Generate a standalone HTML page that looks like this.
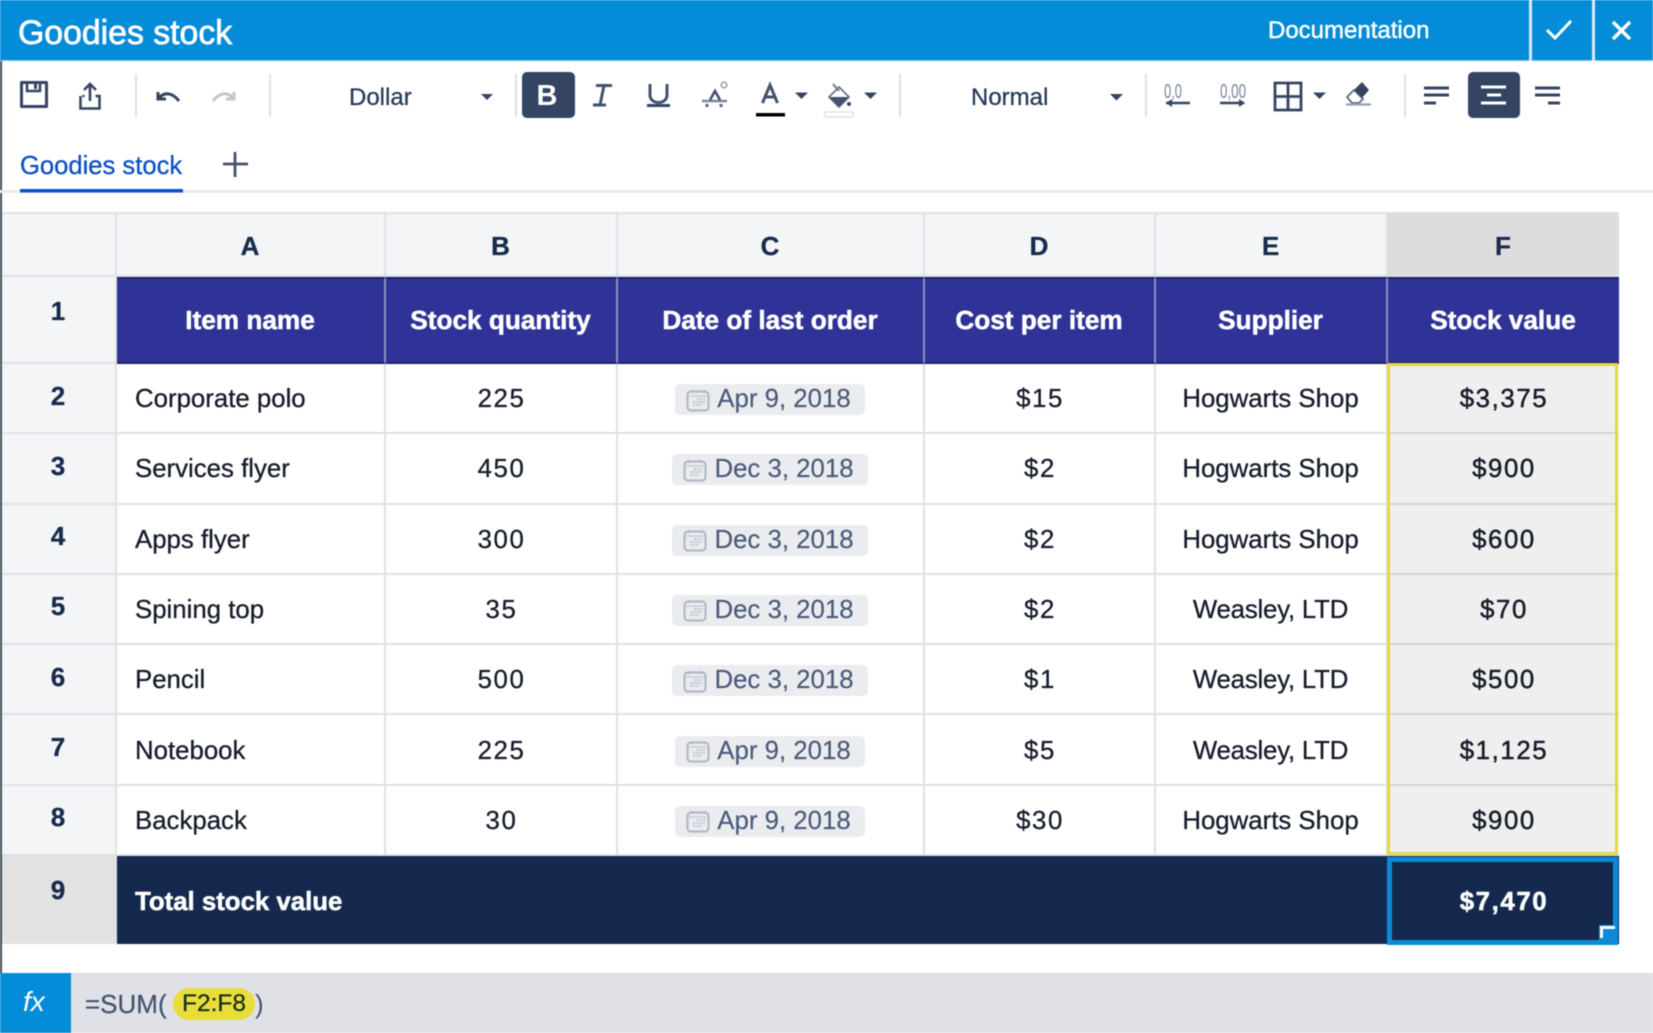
<!DOCTYPE html>
<html lang="en"><head><meta charset="utf-8"><title>Goodies stock</title>
<style>
*{box-sizing:border-box;margin:0;padding:0}
html,body{width:1653px;height:1033px;overflow:hidden;background:#fff}
body{font-family:"Liberation Sans",sans-serif;color:#172b4d;position:relative}
#root{position:absolute;left:0;top:0;width:1653px;height:1033px;filter:blur(.45px);background:#fff}
.a{position:absolute;white-space:nowrap}
.top{left:0;top:0;width:1653px;height:61px;background:#058cd8;border-bottom:1px solid #7cc3ee}
.grid{position:absolute;left:2px;top:212px;display:grid;grid-template-columns:115px 269px 232px 307px 231px 232px 231px;grid-template-rows:65px 87px repeat(7,70.286px) 88px;font-size:25.8px;color:#161c2b;-webkit-text-stroke:.3px #161c2b}
.grid>div{display:flex;align-items:center;justify-content:center;border-right:2px solid #dfe1e6;border-bottom:2px solid #dfe1e6;white-space:nowrap;background:#fff;padding-top:3px;padding-right:1px}
.n{letter-spacing:1.6px;padding-right:0!important;padding-left:1px}
.h{background:#f4f5f7!important;font-weight:700;font-size:26px;color:#172b4d;-webkit-text-stroke:.3px #172b4d}
.h.top1{border-top:2px solid #dfe1e6}
.h.sel{background:#dddddd!important;border-right:none!important}
.r{padding-top:0!important;padding-bottom:4px}
.r1{padding-bottom:16px}
.r9{background:#e2e2e2!important;padding-bottom:22px;border-bottom:none!important}
.p{background:#2f3296!important;color:#fff;font-weight:700;font-size:26.2px;padding-top:0!important;border-top:2px solid #1d2060;border-right:2px solid #8d8fc4!important;border-bottom:2px solid #20235f!important;-webkit-text-stroke:.5px #fff}
.l{justify-content:flex-start!important;padding-left:18px}
.f{background:#efefef!important;border-right:none!important;border-bottom:2px solid #d5d5d8!important;-webkit-text-stroke:.45px #111520}
.t{background:#15294f!important;color:#fff;font-weight:700;font-size:25.8px;border:none!important;padding-top:6px!important;-webkit-text-stroke:.5px #fff}
.pill{display:inline-flex;align-items:center;height:31px;background:#ebecf0;border-radius:5px;color:#4a5a78;padding:0 14px 0 11px;font-size:25.8px;gap:7px;-webkit-text-stroke:.15px #4a5a78}
.pill svg{flex:none}
</style></head><body><div id="root">
<svg width="0" height="0" style="position:absolute"><defs><symbol id="cal" viewBox="0 0 24 24" fill="none"><rect x="1.500" y="3.500" width="21" height="19" rx="3.500" stroke="#b3b9c4" stroke-width="2.200"/><path d="M6 2v3M18 2v3" stroke="#b3b9c4" stroke-width="2"/><path d="M3 8h18" stroke="#c8ccd4" stroke-width="1.500"/><path d="M11 11h8M7 14h12M7 17h9" stroke="#c1c7d0" stroke-width="2" stroke-dasharray="2.200 1"/></symbol></defs></svg>
<div class="a top"></div>
<div class="a" style="left:18px;top:12px;font-size:33.8px;line-height:42px;color:#fff;-webkit-text-stroke:.7px #fff">Goodies stock</div>
<div class="a" style="left:1268px;top:16px;font-size:24px;line-height:30px;color:#fff;-webkit-text-stroke:.45px #fff">Documentation</div>
<div class="a" style="left:1529px;top:0;width:3px;height:61px;background:#d6ecf9"></div>
<div class="a" style="left:1592px;top:0;width:3px;height:61px;background:#d6ecf9"></div>
<div class="a" style="left:0;top:61px;width:2px;height:912px;background:#3b4a55"></div>

<div class="a" style="left:349px;top:83px;font-size:24px;line-height:30px;color:#253858;-webkit-text-stroke:.25px #253858">Dollar</div>
<div class="a" style="left:971px;top:83px;font-size:24px;line-height:30px;color:#253858;-webkit-text-stroke:.25px #253858">Normal</div>
<div class="a" style="left:522px;top:72px;width:53px;height:46px;background:#344563;border-radius:5px"></div>
<div class="a" style="left:1468px;top:72px;width:52px;height:46px;background:#344563;border-radius:5px"></div>

<svg class="a" style="left:0;top:0" width="1653" height="200" viewBox="0 0 1653 200" fill="none">
<!-- check / close -->
<path d="M1547 30l8 8 16-17" stroke="#fff" stroke-width="3"/>
<path d="M1613 22l17 17M1630 22l-17 17" stroke="#fff" stroke-width="3.400"/>
<!-- separators -->
<g fill="#dfe1e6"><rect x="135" y="74" width="2" height="43"/><rect x="269" y="74" width="2" height="43"/><rect x="515" y="74" width="2" height="43"/><rect x="899" y="74" width="2" height="43"/><rect x="1145" y="74" width="2" height="43"/><rect x="1404" y="74" width="2" height="43"/></g>
<!-- save -->
<path d="M21.500 82.500h25v24h-25z" stroke="#344563" stroke-width="3" stroke-linejoin="round"/>
<path d="M27 83v8h13v-8" stroke="#344563" stroke-width="2.500"/><rect x="34" y="84" width="3" height="5" fill="#344563"/>
<!-- share -->
<path d="M80.500 96v12.500h19V96h-4M84.500 96h-2" stroke="#344563" stroke-width="2.600"/>
<path d="M90 101V84M84 90l6-6 6 6" stroke="#344563" stroke-width="2.600"/>
<!-- undo redo -->
<path d="M158 92v7h8M159 98c5-6 13-6 20 3" stroke="#344563" stroke-width="3"/>
<path d="M234 92v7h-8M233 98c-5-6-13-6-20 3" stroke="#c1c7d0" stroke-width="3"/>
<!-- carets -->
<g fill="#344563"><path d="M481 94h12l-6 6z"/><path d="M795 92.500h13l-6.500 6.500z"/><path d="M864 92.500h13l-6.500 6.500z"/><path d="M1110 94h13l-6.500 6.500z"/><path d="M1313 92.500h13l-6.500 6.500z"/></g>
<!-- B -->
<text x="547" y="105" text-anchor="middle" font-family="Liberation Sans" font-weight="700" font-size="29" fill="#fff">B</text>
<!-- I -->
<path d="M596 85.500h16M593 105h13M604 85.500l-4 19.500" stroke="#42526e" stroke-width="3"/>
<!-- U -->
<path d="M650 84v11c0 10 17 10 17 0V84" stroke="#42526e" stroke-width="3"/><rect x="647" y="104" width="23" height="3" fill="#344563"/>
<!-- strike A -->
<path d="M702 101h25" stroke="#7a869a" stroke-width="2.400"/><path d="M710 100l5-9 5 9" stroke="#42526e" stroke-width="2.600"/><circle cx="707" cy="105.500" r="1.700" fill="#5e6c84"/><circle cx="721" cy="105.500" r="1.700" fill="#5e6c84"/><circle cx="724" cy="85" r="2.800" stroke="#97a0af" stroke-width="1.600"/>
<!-- A colour -->
<path d="M762.500 103l7.500-18 7.500 18M765 97h10" stroke="#42526e" stroke-width="3"/>
<rect x="756" y="113" width="29" height="3.500" fill="#000"/>
<!-- paint -->
<path d="M829 97l10-10 10 10-10 10z" stroke="#6b778c" stroke-width="1.800"/><path d="M829 97h20l-10 10z" fill="#42526e"/><path d="M833 84l6 7" stroke="#6b778c" stroke-width="2"/><circle cx="849" cy="104" r="2" fill="#344563"/>
<rect x="824.500" y="112" width="29" height="5" rx="2" stroke="#dfe1e6" stroke-width="1.500"/>
<!-- decimals -->
<text x="1173" y="98" text-anchor="middle" font-family="Liberation Sans" font-size="20" fill="#7a869a" textLength="18" lengthAdjust="spacingAndGlyphs">0,0</text>
<path d="M1166 103h24" stroke="#344563" stroke-width="2.400"/><path d="M1172 99l-6 4 6 4" fill="#344563"/>
<text x="1233" y="98" text-anchor="middle" font-family="Liberation Sans" font-size="20" fill="#7a869a" textLength="26" lengthAdjust="spacingAndGlyphs">0,00</text>
<path d="M1220 103h24" stroke="#344563" stroke-width="2.400"/><path d="M1239 99l6 4-6 4" fill="#344563"/>
<!-- grid -->
<path d="M1275 83h26v27h-26zM1288 83v27M1275 96.500h26" stroke="#344563" stroke-width="2.800"/>
<!-- eraser -->
<path d="M1347 97l7-7 9 9-4 4h-7z" stroke="#5e6c84" stroke-width="1.800"/><path d="M1354 90l8-8 7 8-7 8z" fill="#344563"/><path d="M1346 104.500h25" stroke="#97a0af" stroke-width="2.200"/>
<!-- align -->
<path d="M1424 88h25M1424 95h25M1424 103h12" stroke="#344563" stroke-width="3"/>
<path d="M1481 87h25M1487 95h14M1481 103h25" stroke="#fff" stroke-width="3"/>
<path d="M1535 88h25M1535 95h25M1548 103h12" stroke="#344563" stroke-width="3"/>
<!-- tab plus -->
<path d="M235 152v25M223 164h25" stroke="#42526e" stroke-width="2.800"/>
<rect x="0" y="190" width="1653" height="3" fill="#ebecf0"/>
<rect x="20" y="189" width="163" height="3.500" fill="#0b52c8"/>
</svg>
<div class="a" style="left:20px;top:150px;font-size:25.6px;line-height:32px;color:#0b4fc4;-webkit-text-stroke:.3px #0b4fc4">Goodies stock</div>

<div class="grid">
<div class="h top1"></div><div class="h top1">A</div><div class="h top1">B</div><div class="h top1">C</div><div class="h top1">D</div><div class="h top1">E</div><div class="h top1 sel">F</div>

<div class="h r r1">1</div><div class="p">Item name</div><div class="p">Stock quantity</div><div class="p">Date of last order</div><div class="p">Cost per item</div><div class="p">Supplier</div><div class="p" style="border-right:none!important">Stock value</div>

<div class="h r">2</div><div class="l">Corporate polo</div><div class="n">225</div><div><span class="pill"><svg width="24" height="24"><use href="#cal"/></svg>Apr 9, 2018</span></div><div class="n">$15</div><div>Hogwarts Shop</div><div class="f n">$3,375</div>

<div class="h r">3</div><div class="l">Services flyer</div><div class="n">450</div><div><span class="pill"><svg width="24" height="24"><use href="#cal"/></svg>Dec 3, 2018</span></div><div class="n">$2</div><div>Hogwarts Shop</div><div class="f n">$900</div>

<div class="h r">4</div><div class="l">Apps flyer</div><div class="n">300</div><div><span class="pill"><svg width="24" height="24"><use href="#cal"/></svg>Dec 3, 2018</span></div><div class="n">$2</div><div>Hogwarts Shop</div><div class="f n">$600</div>

<div class="h r">5</div><div class="l">Spining top</div><div class="n">35</div><div><span class="pill"><svg width="24" height="24"><use href="#cal"/></svg>Dec 3, 2018</span></div><div class="n">$2</div><div style="letter-spacing:-.2px">Weasley, LTD</div><div class="f n">$70</div>

<div class="h r">6</div><div class="l">Pencil</div><div class="n">500</div><div><span class="pill"><svg width="24" height="24"><use href="#cal"/></svg>Dec 3, 2018</span></div><div class="n">$1</div><div style="letter-spacing:-.2px">Weasley, LTD</div><div class="f n">$500</div>

<div class="h r">7</div><div class="l">Notebook</div><div class="n">225</div><div><span class="pill"><svg width="24" height="24"><use href="#cal"/></svg>Apr 9, 2018</span></div><div class="n">$5</div><div style="letter-spacing:-.2px">Weasley, LTD</div><div class="f n">$1,125</div>

<div class="h r">8</div><div class="l">Backpack</div><div class="n">30</div><div><span class="pill"><svg width="24" height="24"><use href="#cal"/></svg>Apr 9, 2018</span></div><div class="n">$30</div><div>Hogwarts Shop</div><div class="f n">$900</div>

<div class="h r9">9</div><div class="t l" style="grid-column:2 / span 5">Total stock value</div><div class="t n">$7,470</div>
</div>

<div class="a" style="left:1387px;top:363px;width:231px;height:492px;border:3.500px solid #e2d94a"></div>
<div class="a" style="left:1387px;top:857px;width:231px;height:88px;border:5px solid #0c8ad6"></div>
<div class="a" style="left:1599px;top:925px;width:19px;height:20px;background:#0c8ad6"></div>
<div class="a" style="left:1600px;top:926px;width:15px;height:12px;border-left:3px solid #fff;border-top:3px solid #fff"></div>

<div class="a" style="left:0;top:973px;width:1653px;height:60px;background:#dfe1e6"></div>
<div class="a" style="left:0;top:973px;width:71px;height:60px;background:#058cd8"></div>
<div class="a" style="left:23px;top:985px;font-style:italic;font-size:28px;line-height:34px;color:#fff">fx</div>
<div class="a" style="left:85px;top:988px;font-size:26px;line-height:32px;color:#42526e;-webkit-text-stroke:.2px #42526e">=SUM(</div>
<div class="a" style="left:173px;top:988px;width:82px;height:32px;border-radius:16px;background:#e8dd3b;text-align:center;font-size:24.5px;line-height:32px;color:#172b1d;-webkit-text-stroke:.2px #172b1d">F2:F8</div>
<div class="a" style="left:255px;top:988px;font-size:26px;line-height:32px;color:#42526e">)</div>
</div></body></html>
